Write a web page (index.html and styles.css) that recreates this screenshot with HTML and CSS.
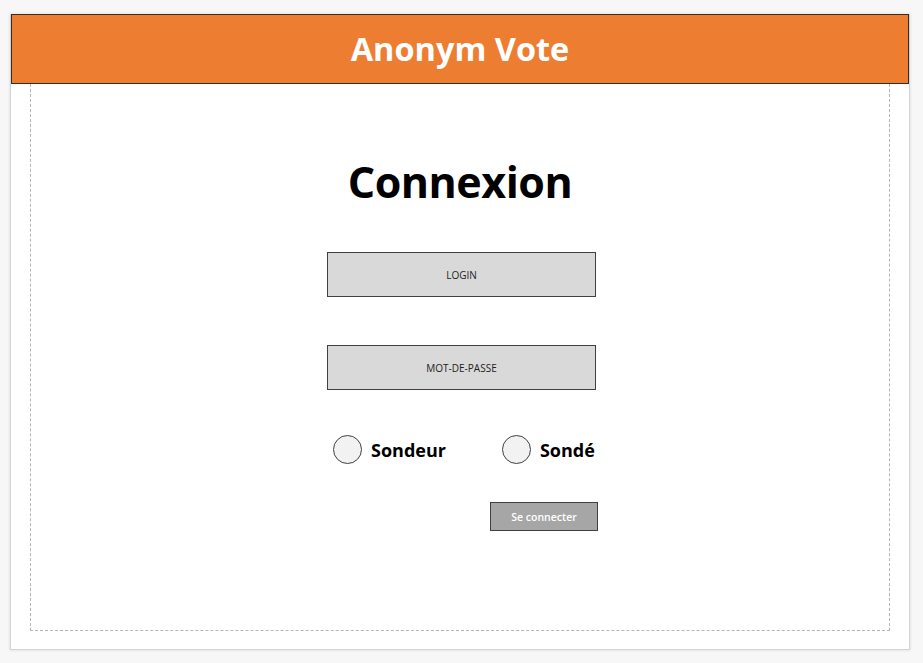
FILE: index.html
```html
<!DOCTYPE html>
<html lang="fr">
<head>
<meta charset="utf-8">
<title>Anonym Vote</title>
<link rel="stylesheet" href="styles.css">
</head>
<body>
<div class="card">
  <header class="topbar">Anonym Vote</header>
  <main class="frame">
    <h1 class="title">Connexion</h1>
    <div class="form">
      <div class="field">LOGIN</div>
      <div class="field field-gap">MOT-DE-PASSE</div>
      <div class="radios">
        <label class="radio"><span class="dot"></span><span class="radio-label">Sondeur</span></label>
        <label class="radio"><span class="dot"></span><span class="radio-label">Sondé</span></label>
      </div>
      <div class="actions">
        <button class="submit" type="button">Se connecter</button>
      </div>
    </div>
  </main>
</div>
</body>
</html>
```
FILE: styles.css
```css
html, body {
  margin: 0;
  padding: 0;
}
body {
  background: #f7f7f7;
  font-family: "Open Sans", "Noto Sans", sans-serif;
  width: 923px;
  height: 663px;
  overflow: hidden;
}
.card {
  margin: 14px 0 0 10px;
  width: 900px;
  height: 636px;
  box-sizing: border-box;
  background: #ffffff;
  border: 1px solid #d4d4d4;
  border-top: none;
  box-shadow: 0 0 3px rgba(0, 0, 0, 0.12);
  display: flex;
  flex-direction: column;
}
.topbar {
  height: 70px;
  box-sizing: border-box;
  background: #ed7d31;
  border: 1px solid #3a2a20;
  color: #ffffff;
  font-weight: 700;
  font-size: 32.5px;
  display: flex;
  align-items: center;
  justify-content: center;
  padding-bottom: 2px;
}
.frame {
  flex: 1;
  margin: 0 19px 18px 19px;
  border: 1px dashed #b5b5b5;
  border-top: none;
  display: flex;
  flex-direction: column;
  align-items: center;
}
.title {
  margin: 68px 0 0 0;
  font-size: 43px;
  line-height: 60px;
  font-weight: 700;
  color: #000000;
  letter-spacing: -0.5px;
}
.form {
  width: 269px;
  margin: 40px 0 0 3px;
  display: flex;
  flex-direction: column;
}
.field {
  height: 45px;
  box-sizing: border-box;
  background: #d9d9d9;
  border: 1px solid #404040;
  display: flex;
  align-items: center;
  justify-content: center;
  font-size: 10px;
  color: #222222;
}
.field-gap {
  margin-top: 48px;
}
.radios {
  margin-top: 45px;
  display: flex;
  gap: 56px;
  padding-left: 6px;
}
.radio {
  display: flex;
  align-items: center;
  gap: 9px;
}
.dot {
  width: 27px;
  height: 27px;
  border-radius: 50%;
  background: #f2f2f2;
  border: 1px solid #404040;
}
.radio-label {
  font-size: 18px;
  font-weight: 700;
  color: #000000;
}
.actions {
  margin-top: 38px;
  display: flex;
  justify-content: flex-end;
  margin-right: -2px;
}
.submit {
  width: 108px;
  height: 29px;
  background: #a6a6a6;
  border: 1px solid #404040;
  color: #ffffff;
  font-family: "Open Sans", "Noto Sans", sans-serif;
  font-size: 10.5px;
  font-weight: 600;
  padding: 0;
}
```
